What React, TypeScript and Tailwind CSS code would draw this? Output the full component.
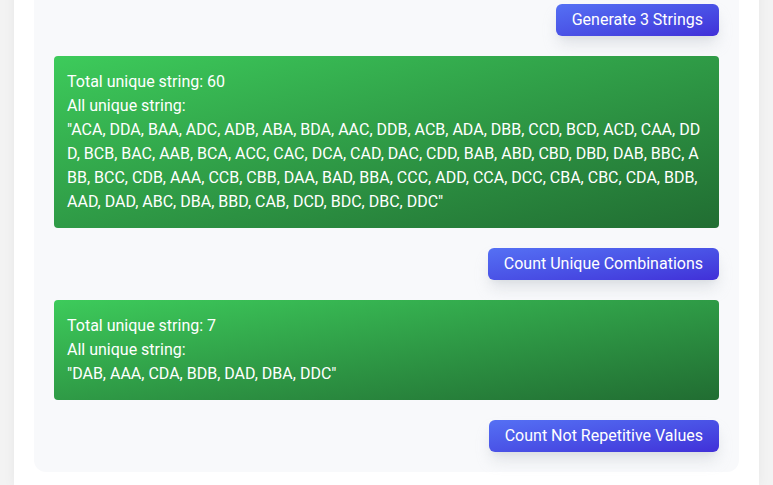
import React from "react";

const all =
  "ACA, DDA, BAA, ADC, ADB, ABA, BDA, AAC, DDB, ACB, ADA, DBB, CCD, BCD, ACD, CAA, DDD, BCB, BAC, AAB, BCA, ACC, CAC, DCA, CAD, DAC, CDD, BAB, ABD, CBD, DBD, DAB, BBC, ABB, BCC, CDB, AAA, CCB, CBB, DAA, BAD, BBA, CCC, ADD, CCA, DCC, CBA, CBC, CDA, BDB, AAD, DAD, ABC, DBA, BBD, CAB, DCD, BDC, DBC, DDC";

const distinct = "DAB, AAA, CDA, BDB, DAD, DBA, DDC";

const ResultBox = ({ total, list }: { total: number; list: string }) => (
  <div className="rounded bg-gradient-to-br from-[#3dcb5b] to-[#216d32] px-[13px] py-3.5 text-white leading-6 break-all">
    <div>Total unique string: {total}</div>
    <div>All unique string:</div>
    <div>"{list}"</div>
  </div>
);

const ActionButton = ({ label }: { label: string }) => (
  <div className="flex justify-end">
    <button className="h-8 rounded-md bg-gradient-to-br from-[#5570f4] to-[#412fd8] px-4 text-white shadow-lg shadow-gray-300/70">
      {label}
    </button>
  </div>
);

export default function App() {
  return (
    <div
      className="min-h-[485px] bg-[#f3f3f3] px-[14px] text-[16px]"
      style={{ fontFamily: 'Roboto, "Noto Sans", sans-serif' }}
    >
      <div className="bg-white px-5 pb-[14px] shadow-[0_0_12px_rgba(0,0,0,0.05)]">
        <div className="-mt-8 flex flex-col gap-5 rounded-b-xl bg-[#f8f9fb] p-5 pt-9">
          <ActionButton label="Generate 3 Strings" />
          <ResultBox total={60} list={all} />
          <ActionButton label="Count Unique Combinations" />
          <ResultBox total={7} list={distinct} />
          <ActionButton label="Count Not Repetitive Values" />
        </div>
      </div>
    </div>
  );
}
